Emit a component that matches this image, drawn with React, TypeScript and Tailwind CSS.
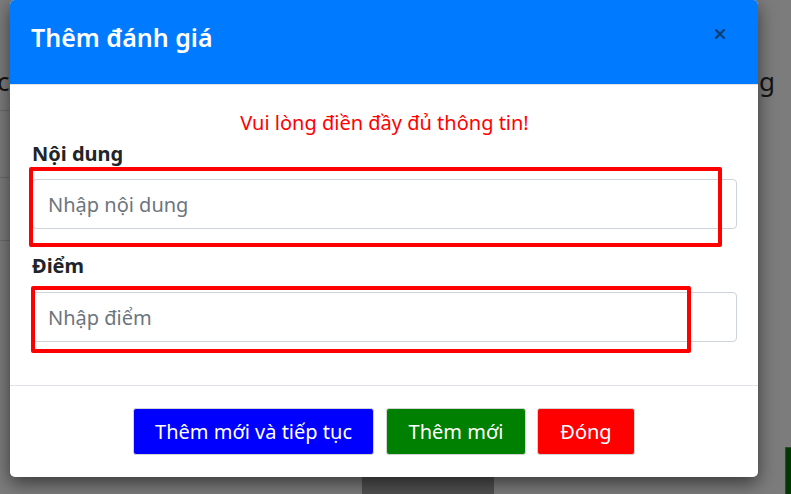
import React from "react";

export default function App() {
  return (
    <div className="relative w-[791px] h-[494px] overflow-hidden bg-[#7c7c7c] font-['Noto_Sans',sans-serif]">
      {/* dimmed page behind the overlay */}
      <div className="flex h-[494px]">
        <div className="w-[10px] flex flex-col">
          <div className="h-[110px] pt-[66px] text-[26px] leading-[30px] text-[#141414] -ml-[3px]">c</div>
          <div className="h-[67px] border-t border-[#6a6a6a]"></div>
          <div className="h-[63px] border-t border-[#6a6a6a]"></div>
          <div className="border-t border-[#6a6a6a]"></div>
        </div>
        <div className="flex-1 flex flex-col justify-end">
          <div className="ml-[352px] w-[132px] h-[32px] bg-[#505050]"></div>
        </div>
        <div className="w-[33px] flex flex-col justify-between">
          <div className="pt-[66px] pl-[1px] text-[26px] leading-[30px] text-[#141414]">g</div>
          <div className="ml-[27px] h-[47px] bg-[#003a00] border-l border-t border-[#2a4a2a]"></div>
        </div>
      </div>

      {/* modal */}
      <div className="absolute left-[10px] top-0 w-[748px] h-[477px] bg-white rounded-[5px] shadow-[0_6px_18px_rgba(0,0,0,0.55)] flex flex-col overflow-hidden">
        <div className="h-[85px] bg-[#007bff] border-b border-[#dee2e6] pl-[21px] pr-[33px] pt-[22px] flex justify-between items-start">
          <div className="text-[25px] leading-[30px] font-semibold text-white">Thêm đánh giá</div>
          <svg width="10" height="10" viewBox="0 0 10 10" className="mt-[7px]">
            <path d="M1 1 L9 9 M9 1 L1 9" stroke="#0b3f78" strokeWidth="2.4" strokeLinecap="square" />
          </svg>
        </div>

        <div className="pl-[22px] pr-[21px] pt-[23px] h-[300px] flex flex-col">
          <div className="text-center text-[20px] leading-[30px] text-[#ff0000]">Vui lòng điền đầy đủ thông tin!</div>
          <div className="mt-[1px] text-[20px] leading-[30px] font-bold text-[#212529]">Nội dung</div>
          <div className="mt-[10px] h-[50px] border border-[#ced4da] rounded-[4px] flex items-center pl-[15px] pt-[2px] text-[20px] text-[#6c757d]">Nhập nội dung</div>
          <div className="mt-[22px] text-[20px] leading-[30px] font-bold text-[#212529]">Điểm</div>
          <div className="mt-[11px] h-[50px] border border-[#ced4da] rounded-[4px] flex items-center pl-[15px] pt-[2px] text-[20px] text-[#6c757d]">Nhập điểm</div>
        </div>

        <div className="border-t border-[#dee2e6] flex-1 flex justify-center items-start pt-[22px]">
          <div className="w-[241px] h-[47px] bg-[#0000ff] border border-[#d4d4d4] rounded-[3px] text-white text-[20px] flex items-center justify-center">Thêm mới và tiếp tục</div>
          <div className="ml-[12px] w-[140px] h-[47px] bg-[#008000] border border-[#d4d4d4] rounded-[3px] text-white text-[20px] flex items-center justify-center">Thêm mới</div>
          <div className="ml-[11px] w-[98px] h-[47px] bg-[#ff0000] border border-[#d4d4d4] rounded-[3px] text-white text-[20px] flex items-center justify-center">Đóng</div>
        </div>

        {/* annotation boxes */}
        <div className="absolute left-[19px] top-[167px] w-[693px] h-[80px] border-[4px] border-[#ff0000] rounded-[2px]"></div>
        <div className="absolute left-[21px] top-[286px] w-[660px] h-[67px] border-[4px] border-[#ff0000] rounded-[2px]"></div>
      </div>
    </div>
  );
}
